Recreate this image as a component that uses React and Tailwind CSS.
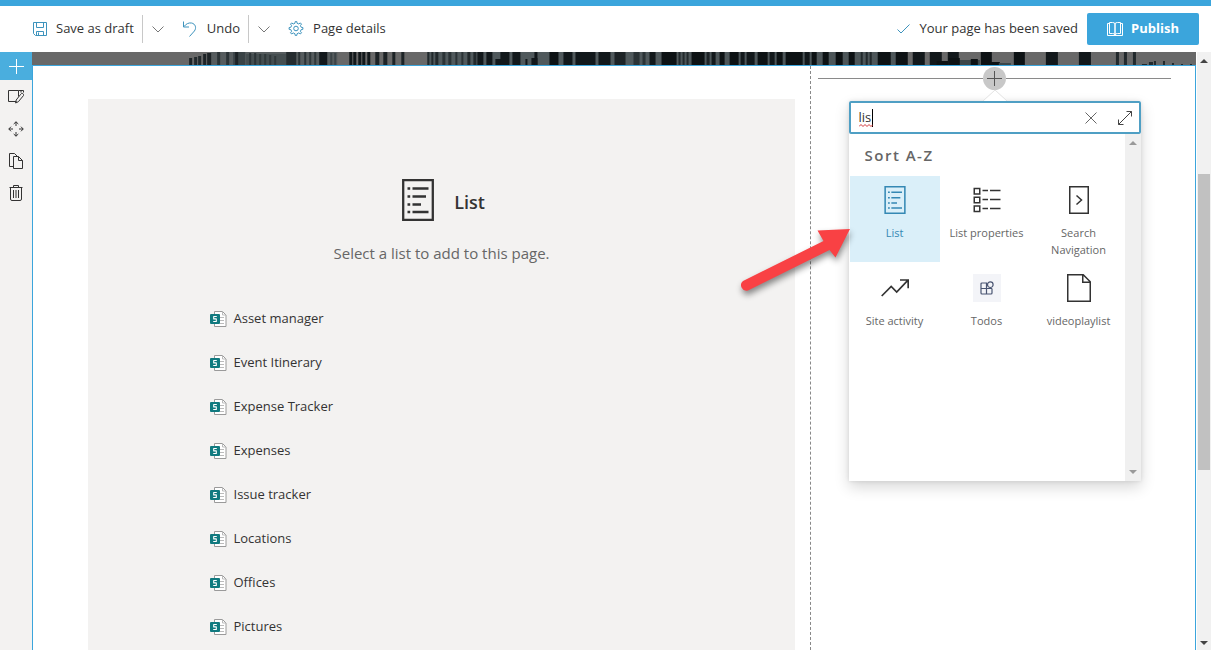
import React, { useState } from "react";

const listNames = [
  "Asset manager",
  "Event Itinerary",
  "Expense Tracker",
  "Expenses",
  "Issue tracker",
  "Locations",
  "Offices",
  "Pictures",
];

/* Banner columns: [x, width, top, shade] */
const bannerColumns = [
  [157, 3, 6, "#1d2326"], [162, 3, 5, "#22292c"], [166, 3, 4, "#22292c"], [171, 3, 2, "#1d2326"], [175, 4, 1, "#1d2326"],
  [185, 3, 0, "#2b3336"], [194, 3, 0, "#2b3336"], [201, 12, 0, "#3a4346"], [203, 3, 0, "#1d2326"], [214, 40, 2, "#454e50"],
  [217, 2, 1, "#2b3336"], [222, 2, 1, "#2b3336"], [227, 2, 2, "#30383a"], [232, 2, 2, "#30383a"], [237, 2, 3, "#30383a"], [242, 2, 4, "#30383a"],
  [254, 10, 0, "#252c2f"], [266, 2, 0, "#2b3336"], [272, 2, 0, "#2b3336"], [277, 2, 0, "#30383a"], [282, 2, 0, "#30383a"],
  [287, 8, 0, "#12181b"], [298, 2, 1, "#3a4346"], [302, 2, 1, "#3a4346"],
  [317, 3, 0, "#12181b"], [321, 3, 0, "#12181b"], [326, 3, 0, "#12181b"], [330, 3, 0, "#12181b"], [335, 3, 0, "#12181b"],
  [343, 4, 0, "#1d2326"], [351, 4, 0, "#1d2326"], [360, 3, 0, "#1d2326"], [369, 3, 0, "#1d2326"],
  [395, 2, 0, "#22292c"], [399, 2, 0, "#22292c"], [403, 3, 0, "#22292c"], [410, 3, 0, "#2b3336"], [416, 3, 0, "#2b3336"],
  [423, 2, 0, "#2b3336"], [429, 2, 0, "#2b3336"], [435, 3, 0, "#22292c"], [441, 3, 0, "#22292c"], [445, 6, 0, "#12181b"],
  [454, 6, 0, "#12181b"], [463, 6, 7, "#12181b"], [468, 9, 0, "#12181b"], [480, 8, 0, "#12181b"], [493, 2, 7, "#12181b"],
  [499, 6, 6, "#12181b"], [502, 3, 0, "#12181b"], [517, 9, 0, "#0d1214"], [531, 9, 0, "#12181b"], [543, 20, 0, "#12181b"],
  [566, 12, 0, "#12181b"], [582, 11, 0, "#1d2326"], [601, 6, 0, "#2b3336"], [610, 3, 0, "#2b3336"], [617, 6, 0, "#12181b"],
  [629, 15, 0, "#0d1214"], [646, 2, 0, "#22292c"], [650, 2, 0, "#22292c"], [654, 2, 0, "#22292c"], [659, 13, 0, "#0d1214"],
  [674, 3, 0, "#1d2326"], [679, 4, 0, "#12181b"], [687, 5, 0, "#0d1214"], [697, 9, 0, "#0d1214"], [708, 4, 0, "#12181b"],
  [714, 8, 0, "#12181b"], [725, 10, 0, "#0d1214"], [737, 5, 0, "#12181b"], [744, 6, 0, "#0d1214"], [753, 17, 0, "#0d1214"],
  [772, 5, 0, "#12181b"], [779, 5, 0, "#0d1214"], [790, 6, 0, "#0d1214"], [803, 7, 0, "#0d1214"], [816, 6, 0, "#0d1214"],
  [828, 2, 0, "#22292c"], [833, 2, 0, "#22292c"], [837, 2, 0, "#22292c"], [845, 13, 0, "#0d1214"], [863, 12, 0, "#0d1214"],
  [880, 12, 0, "#12181b"], [897, 12, 0, "#12181b"], [904, 12, 9, "#0d1214"], [915, 11, 0, "#12181b"], [925, 22, 8, "#3c4649"],
  [916, 11, 6, "#0d1214"], [938, 7, 7, "#0d1214"], [948, 11, 0, "#0d1214"], [958, 9, 10, "#0d1214"], [966, 12, 11, "#3c4649"],
  [981, 11, 0, "#0d1214"], [1013, 12, 0, "#12181b"], [1046, 12, 0, "#12181b"], [1083, 3, 0, "#22292c"], [1091, 3, 0, "#22292c"],
  [1100, 3, 0, "#22292c"], [1109, 5, 12, "#22292c"], [1116, 4, 10, "#22292c"], [1121, 2, 9, "#22292c"], [1130, 2, 9, "#22292c"],
  [1139, 2, 11, "#22292c"], [1148, 2, 12, "#22292c"], [1157, 2, 12, "#22292c"],
];

function Icon({ className, box = "0 0 16 16", stroke = 1, children }) {
  return (
    <svg className={className} viewBox={box} fill="none" stroke="currentColor" strokeWidth={stroke} aria-hidden="true">
      {children}
    </svg>
  );
}

const SaveIcon = () => (
  <Icon className="size-[14px] text-[#3d93bd]" box="0 0 14 14">
    <path d="M.5.5h13v13H2.5l-2-2zM3.5.5v5h7v-5M3.5 13.5v-4h7v4M5.5 10.5v3" />
  </Icon>
);
const UndoIcon = () => (
  <Icon className="size-4 text-[#3d93bd]">
    <path d="M1.500.5v5.500h5.500M1.800 5.700C4 3 6.500 1.500 9.500 2c4 .8 5.200 5 2.900 8L7.500 15.500" />
  </Icon>
);
const ChevronIcon = () => (
  <Icon className="h-[7px] w-3 text-[#777]" box="0 0 12 7">
    <path d="m.5.5 5.500 5.500 5.500-5.500" />
  </Icon>
);
const GearIcon = () => (
  <Icon className="size-4 text-[#3d93bd]">
    <path d="M6.900 2.300 7.200.6h1.600l.3 1.700 1.700.7 1.500-1.100 1.200 1.200-1.100 1.500.8 1.700 1.700.3v1.700l-1.700.3-.8 1.700 1.100 1.500-1.200 1.200-1.500-1.100-1.700.8-.3 1.700H7.200l-.3-1.700-1.700-.8-1.500 1.100-1.200-1.200 1.100-1.500-.8-1.700-1.700-.3V6.600l1.700-.3.8-1.700-1.100-1.500 1.200-1.200 1.500 1.100z" />
    <circle cx="8" cy="7.500" r="2.300" />
  </Icon>
);
const CheckIcon = () => (
  <Icon className="h-[10px] w-[13px] text-[#3d93bd]" box="0 0 13 10">
    <path d="m.5 5.500 3.500 3.500L12.500.5" />
  </Icon>
);
const BookIcon = () => (
  <Icon className="h-[14px] w-4" box="0 0 16 14">
    <path d="M2.500 1.500h-2v12h15v-12h-2M2.500.5h3q2.500 0 2.500 1.500V13q0-1.500-2.500-1.500h-3zM13.500.5h-3Q8 .5 8 2v11q0-1.500 2.500-1.500h3z" />
  </Icon>
);
const PlusIcon = () => (
  <Icon className="size-[15px]" box="0 0 15 15">
    <path d="M7.500 0v15M0 7.500h15" />
  </Icon>
);
const EditSectionIcon = () => (
  <Icon className="size-4">
    <path d="M8.500 12.500h-8v-11h10v6M10.500 1.500h5v2M13 1.500v2M12.800 5.200 8.200 11l-.6 3 2.800-1.300L15.500 6.500a1.500 1.500 0 0 0-2.700-1.300z" />
  </Icon>
);
const MoveIcon = () => (
  <Icon className="size-4">
    <path d="M8 .8V5M5.700 3 8 .8 10.300 3M8 15.200V11M5.700 13 8 15.200 10.300 13M.8 8H5M3 5.700.8 8 3 10.300M15.200 8H11M13 5.700 15.200 8 13 10.300" />
  </Icon>
);
const CopyIcon = () => (
  <Icon className="size-4">
    <path d="M5.500 13.500h-4V.5h5l2.500 2.500M5.500 3.500h5l4 4v8h-9zM10.500 3.500v4h4" />
  </Icon>
);
const TrashIcon = () => (
  <Icon className="size-4">
    <path d="M1.500 2.500h13M5.500 2.500v-2h5v2M2.500 2.500v11.500q0 1.500 1.500 1.500h8q1.500 0 1.500-1.500V2.500M5.500 5v8M8 5v8M10.500 5v8" />
  </Icon>
);
const ListIcon = ({ className }) => (
  <Icon className={className} box="0 0 32 42" stroke={2.300}>
    <path d="M1.200 1.200h29.600v39.600H1.200zM5.500 9.500h2.700M10.500 9.500h16M5.500 17.500h2.700M10.500 17.500h13.500M5.500 25.500h2.700M10.500 25.500h8.500M5.500 33h2.700M10.500 33h16" />
  </Icon>
);
const ListPropsIcon = () => (
  <Icon className="h-7 w-7" box="0 0 28 28" stroke={1.500}>
    <path d="M1.250 2.500h5.500v5.500H1.250zM1.250 11.250h5.500v5.500H1.250zM1.250 20h5.500v5.500H1.250zM9.500 4.500h5.500M17 4.500h10.500M9.500 13.500h5.500M17 13.500h10.500M9.500 22.500h5.500M17 22.500h10.500" />
  </Icon>
);
const SearchNavIcon = () => (
  <Icon className="h-7 w-5" box="0 0 20 28" stroke={1.500}>
    <path d="M.75.75h18.500v26.500H.75zM7.500 9.500l5 4.500-5 4.500" />
  </Icon>
);
const ActivityIcon = () => (
  <Icon className="h-7 w-7" box="0 0 28 28" stroke={1.700}>
    <path d="m.7 22 9.500-9.500 5.500 5.500L27 6.200M19 6h8.200v8.200" />
  </Icon>
);
const TodosIcon = () => (
  <span className="flex size-7 items-center justify-center bg-[#f3f4f8] text-[#4a5572]">
    <Icon className="size-[14px]" box="0 0 14 14" stroke={1.200}>
      <path d="M7 2H2Q1 2 1 3v9q0 1 1 1h9q1 0 1-1V7.500M1 7.500h11M6.500 2v11" />
      <circle cx="10.300" cy="3.700" r="2.800" />
    </Icon>
  </span>
);
const PageIcon = () => (
  <Icon className="h-7 w-6" box="0 0 24 28" stroke={1.500}>
    <path d="M.75.75h15.500l7 7v19.500H.75zM15.750.75v7.500h7.500" />
  </Icon>
);
const SharePointListIcon = () => (
  <svg className="h-4 w-[17px] shrink-0" viewBox="0 0 17 16" fill="none" aria-hidden="true">
    <path d="M4.500.5h8l3.500 3.500v11.500H4.500z" fill="#fff" stroke="#9a9a9a" />
    <path d="M12.500.5v3.500h3.500M10 6.500h4M10 9.500h4M10 12.500h4" stroke="#bbb" />
    <rect x="0" y="3" width="10" height="10" rx="1" fill="#107a7f" />
    <path d="M6.800 5.500H3.700v2.400h2.600v2.600H3.200" stroke="#fff" strokeWidth="1.100" strokeLinejoin="round" />
  </svg>
);

const webParts = [
  { name: "List", icon: <ListIcon className="h-[28px] w-[22px]" />, active: true },
  { name: "List properties", icon: <ListPropsIcon /> },
  { name: "Search Navigation", icon: <SearchNavIcon /> },
  { name: "Site activity", icon: <ActivityIcon /> },
  { name: "Todos", icon: <TodosIcon /> },
  { name: "videoplaylist", icon: <PageIcon /> },
];

const tools = [
  { name: "Edit section", icon: <EditSectionIcon /> },
  { name: "Move section", icon: <MoveIcon /> },
  { name: "Duplicate section", icon: <CopyIcon /> },
  { name: "Delete section", icon: <TrashIcon /> },
];

function Triangle({ up, className }) {
  return (
    <svg className={className} viewBox="0 0 8 4" aria-hidden="true">
      <path d={up ? "M0 4 4 0l4 4z" : "M0 0h8L4 4z"} fill="currentColor" />
    </svg>
  );
}

function Toolbar() {
  return (
    <header className="flex h-[52px] shrink-0 items-center justify-between border-t-[6px] border-[#3ba5dc] bg-white pr-3 pl-[33px] text-[13px]">
      <div className="flex items-center">
        <button className="flex items-center gap-[9px]">
          <SaveIcon />
          Save as draft
        </button>
        <button aria-label="Save options" className="ml-2 flex h-7 items-center border-l border-[#c8c8c8] pl-[9px]">
          <ChevronIcon />
        </button>
        <button className="ml-[18px] flex items-center gap-[9px]">
          <UndoIcon />
          Undo
        </button>
        <button aria-label="Undo options" className="ml-2 flex h-7 items-center border-l border-[#c8c8c8] pl-[9px]">
          <ChevronIcon />
        </button>
        <button className="ml-[18px] flex items-center gap-[9px]">
          <GearIcon />
          Page details
        </button>
      </div>
      <div className="flex items-center gap-[9px]">
        <CheckIcon />
        <span>Your page has been saved</span>
        <button className="flex h-8 w-28 items-center justify-center gap-2 rounded-xs bg-[#3ba5dc] font-bold text-white">
          <BookIcon />
          Publish
        </button>
      </div>
    </header>
  );
}

function Banner() {
  return (
    <svg className="block h-[13px] w-full shrink-0" viewBox="0 0 1163 13" preserveAspectRatio="none" aria-hidden="true">
      <rect width="1163" height="13" fill="#686868" />
      <rect x="178" width="127" height="13" fill="#565c5e" />
      <rect x="395" width="250" height="13" fill="#50595c" />
      <rect x="645" width="220" height="13" fill="#4d5659" />
      {bannerColumns.map(([x, w, top, shade], i) => (
        <rect key={i} x={x} y={top} width={w} height={13 - top} fill={shade} />
      ))}
    </svg>
  );
}

function WebPartPicker() {
  const [query, setQuery] = useState("lis");
  return (
    <div className="relative mx-auto mt-[11px] flex h-[380px] w-[292px] flex-col bg-white shadow-[0_6px_14px_rgba(0,0,0,0.16),0_0_4px_rgba(0,0,0,0.1)]">
      <svg className="absolute -top-3 left-1/2 h-3 w-6 -translate-x-1/2" viewBox="0 0 24 12" aria-hidden="true">
        <path d="M0 12 12 1l12 11" fill="#fff" stroke="#e2e2e2" />
      </svg>
      <div className="relative flex h-[33px] shrink-0 items-center rounded-xs border-2 border-[#4f9fc4] bg-white pr-[6px] pl-2">
        <input
          aria-label="Search web parts"
          className="min-w-0 flex-1 text-[13px] text-[#333] outline-none"
          value={query}
          onChange={(e) => setQuery(e.target.value)}
        />
        <span className="absolute top-[6px] left-[21px] h-[18px] w-px bg-black" />
        <svg className="absolute top-[21px] left-2 h-[3px] w-[14px]" viewBox="0 0 14 3" fill="none" stroke="#d13438" aria-hidden="true">
          <path d="m0 2.500 2-2 2 2 2-2 2 2 2-2 2 2 2-2" />
        </svg>
        <button aria-label="Clear search" className="mr-5 text-[#666]">
          <Icon className="size-3" box="0 0 12 12">
            <path d="m.5.5 11 11M11.500.5l-11 11" />
          </Icon>
        </button>
        <button aria-label="Expand" className="text-[#444]">
          <Icon className="size-4">
            <path d="m1.500 14.500 13-13M9.500 1.500h5v5M1.500 9.500v5h5" />
          </Icon>
        </button>
      </div>
      <div className="flex min-h-0 flex-1">
        <div className="flex-1">
          <h3 className="px-4 pt-[11px] text-[15px] leading-5 font-semibold tracking-widest text-[#666]">Sort A-Z</h3>
          <div className="mt-[11px] grid grid-cols-3 gap-[2px] px-px text-[11px] leading-[17px] text-[#666]">
            {webParts.map((part) => (
              <button
                key={part.name}
                className={
                  part.active
                    ? "flex h-[86px] flex-col items-center bg-[#daeff9] pt-[10px] text-[#3488b4]"
                    : "flex h-[86px] flex-col items-center pt-[10px]"
                }
              >
                <span className={part.active ? "" : "text-[#333]"}>{part.icon}</span>
                <span className="mt-[10px]">{part.name}</span>
              </button>
            ))}
          </div>
        </div>
        <div className="flex w-4 flex-col items-center justify-between bg-[#f0f0f0] py-[7px] text-[#999]">
          <Triangle up className="h-1 w-2" />
          <Triangle className="h-1 w-2" />
        </div>
      </div>
    </div>
  );
}

export default function App() {
  return (
    <div className="flex h-screen flex-col overflow-hidden bg-white font-['Open_Sans','Noto_Sans',sans-serif] text-[#333]">
      <Toolbar />
      <div className="flex min-h-0 flex-1">
        <nav className="flex w-8 shrink-0 flex-col items-center gap-4 bg-[#f3f2f1]">
          <button aria-label="Add section" className="flex h-7 w-8 items-center justify-center bg-[#4aaede] text-white">
            <PlusIcon />
          </button>
          {tools.map((tool, i) => (
            <button key={tool.name} aria-label={tool.name} className={i === 0 ? "-mt-[7px]" : ""}>
              {tool.icon}
            </button>
          ))}
        </nav>

        <main className="flex min-w-0 flex-1 flex-col">
          <Banner />
          <div className="flex min-h-0 flex-1 border-x border-t border-[#3ba5dc]">
            <section className="flex flex-2 flex-col pt-[33px] pr-[15px] pl-[55px]">
              <div className="flex-1 overflow-hidden bg-[#f3f2f1] pt-20">
                <div className="flex items-center justify-center gap-5 pl-1">
                  <ListIcon className="h-[42px] w-8" />
                  <h2 className="pt-1 text-lg font-semibold">List</h2>
                </div>
                <p className="mt-[22px] text-center text-[15px] leading-5 text-[#666]">Select a list to add to this page.</p>
                <ul className="mx-auto mt-[34px] w-[464px] max-w-full text-[13px]">
                  {listNames.map((name) => (
                    <li key={name}>
                      <button className="flex h-11 items-center gap-[7px]">
                        <SharePointListIcon />
                        {name}
                      </button>
                    </li>
                  ))}
                </ul>
              </div>
            </section>

            <section className="w-[385px] shrink-0 border-l border-dashed border-[#888] pr-6 pl-[7px]">
              <div className="flex items-center">
                <span className="h-px flex-1 bg-[#8a8a8a]" />
                <button aria-label="Add a new web part" className="mt-px flex size-[23px] items-center justify-center rounded-full bg-[#c8c8c8] text-[#555]">
                  <PlusIcon />
                </button>
                <span className="h-px flex-1 bg-[#8a8a8a]" />
              </div>
              <WebPartPicker />
            </section>
          </div>
        </main>

        <div className="flex w-[15px] shrink-0 flex-col items-center border-l border-white bg-[#f1f1f1] pt-[7px] pb-[5px] text-[#444]">
          <Triangle up className="h-1 w-2" />
          <div className="flex w-full flex-1 flex-col px-px pt-[111px] pb-[171px]">
            <div className="flex-1 bg-[#c1c1c1]" />
          </div>
          <Triangle className="h-1 w-2" />
        </div>
      </div>

      <svg className="pointer-events-none absolute top-[222px] left-[734px] h-[76px] w-[120px] drop-shadow-[1px_4px_3px_rgba(0,0,0,0.45)]" viewBox="0 0 120 76" aria-hidden="true">
        <path d="M116 7 83.500 8.500l6 10.500L9 59a5.500 5.500 0 0 0 5 9.500L95.500 28l6 7.500z" fill="#f94144" />
      </svg>
    </div>
  );
}
